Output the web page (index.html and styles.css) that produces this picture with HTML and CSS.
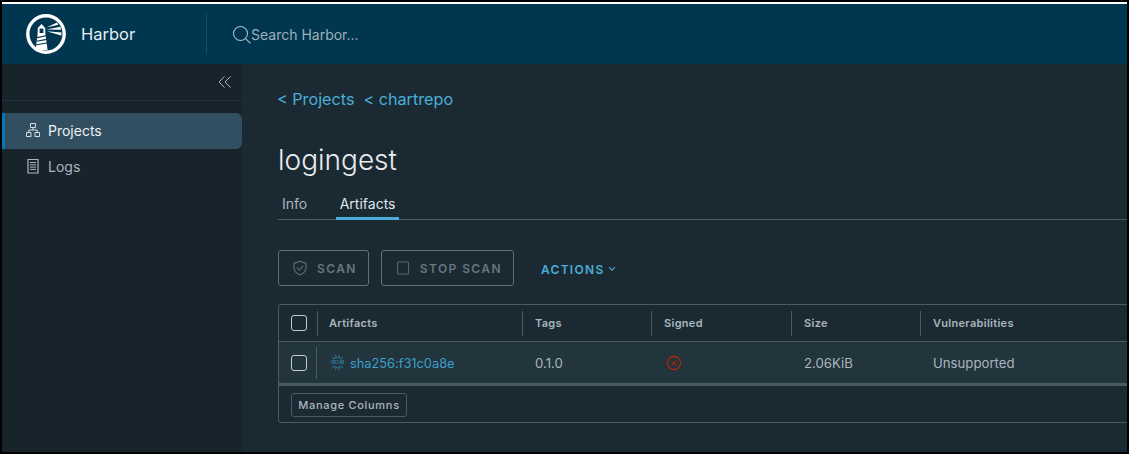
FILE: index.html
```html
<!DOCTYPE html>
<html lang="en">
<head>
<meta charset="utf-8">
<title>Harbor</title>
<link rel="stylesheet" href="styles.css">
</head>
<body>
<div class="frame">
  <header class="topbar">
    <div class="brand">
      <svg class="logo" width="40" height="40" viewBox="0 0 40 40" aria-hidden="true">
        <circle cx="20" cy="20" r="18.2" fill="none" stroke="#fff" stroke-width="3.4"/>
        <path d="M11.8 14 L15.5 10 L19.2 14 L19.4 20 L21.6 36 L9.6 36 L11.6 20 Z" fill="#fff"/>
        <path d="M13.6 14.6 H17.4 V19 H13.6 Z" fill="#00364f"/>
        <path d="M11 23.6 L20.2 21.8 M10.6 27.2 L20.7 25.4 M10.2 30.8 L21.2 29" stroke="#00364f" stroke-width="1.1"/>
        <path d="M20.6 13.6 L31 8.4 L32.4 10.8 Z M20.6 15.4 L34.4 12.8 L35 15.8 Z M20.6 17.2 L35.6 18.4 L35.2 21.4 Z" fill="#fff"/>
      </svg>
      <span class="brand-name">Harbor</span>
    </div>
    <div class="search">
      <svg width="20" height="20" viewBox="0 0 20 20" aria-hidden="true">
        <circle cx="8.5" cy="8.5" r="7" fill="none" stroke="#a9bac4" stroke-width="1.1"/>
        <path d="M13.6 13.6 L18.4 18.4" stroke="#a9bac4" stroke-width="1.3"/>
      </svg>
      <span>Search Harbor...</span>
    </div>
  </header>
  <div class="body">
    <aside class="sidebar">
      <div class="collapse">
        <svg width="14" height="14" viewBox="0 0 14 14" aria-hidden="true">
          <path d="M6.5 1.5 L1 7 L6.5 12.5 M12.5 1.5 L7 7 L12.5 12.5" fill="none" stroke="#a9b6be" stroke-width="1"/>
        </svg>
      </div>
      <nav class="nav">
        <a class="nav-item active">
          <svg width="16" height="16" viewBox="0 0 16 16" aria-hidden="true">
            <path d="M5.5 1.5 H10.5 V5.5 H5.5 Z M1.5 10.5 H6 V14.5 H1.5 Z M10 10.5 H14.5 V14.5 H10 Z M8 5.5 V8 M3.8 10.5 V8 H12.2 V10.5" fill="none" stroke="#d5dde2" stroke-width="1"/>
          </svg>
          <span>Projects</span>
        </a>
        <a class="nav-item">
          <svg width="16" height="16" viewBox="0 0 16 16" aria-hidden="true">
            <path d="M3 1.5 H13 V15 H3 Z" fill="none" stroke="#a9b6be" stroke-width="1.2"/>
            <path d="M5 4.5 H11 M5 6.8 H11 M5 9.1 H11 M5 11.4 H11" stroke="#a9b6be" stroke-width="1"/>
          </svg>
          <span>Logs</span>
        </a>
      </nav>
    </aside>
    <main class="content">
      <div class="crumbs"><a>&lt; Projects</a><a>&lt; chartrepo</a></div>
      <h1 class="title">logingest</h1>
      <div class="tabs">
        <a class="tab tab-info">Info</a>
        <a class="tab tab-active">Artifacts</a>
      </div>
      <div class="actions">
        <button class="btn">
          <svg width="16" height="16" viewBox="0 0 16 16" aria-hidden="true">
            <path d="M8 1.2 L14 3.4 V8 C14 11.5 11 13.8 8 15 C5 13.8 2 11.5 2 8 V3.4 Z M5 7.6 L7.4 10 L11.2 5.8" fill="none" stroke="#5f7078" stroke-width="1.1"/>
          </svg>
          <span>SCAN</span>
        </button>
        <button class="btn">
          <svg width="16" height="16" viewBox="0 0 16 16" aria-hidden="true">
            <rect x="2.5" y="2" width="11" height="12" rx="1" fill="none" stroke="#56666e" stroke-width="1.1"/>
          </svg>
          <span>STOP SCAN</span>
        </button>
        <a class="dropdown">ACTIONS
          <svg width="8" height="6" viewBox="0 0 8 6" aria-hidden="true"><path d="M1 1.2 L4 4.2 L7 1.2" fill="none" stroke="#4aaed9" stroke-width="1.1"/></svg>
        </a>
      </div>
      <section class="grid">
        <div class="grid-row grid-head">
          <div class="cell check"><span class="box"></span></div>
          <div class="cell head-first">Artifacts</div>
          <div class="cell">Tags</div>
          <div class="cell">Signed</div>
          <div class="cell">Size</div>
          <div class="cell">Vulnerabilities</div>
        </div>
        <div class="grid-row grid-data">
          <div class="cell check"><span class="box"></span></div>
          <div class="cell artifact">
            <svg width="17" height="17" viewBox="0 0 17 17" aria-hidden="true">
              <path d="M2.6 2.8 L4.4 4.6 M14.4 2.8 L12.6 4.6 M6.6 0.8 L7.2 3.2 M10.4 0.8 L9.8 3.2 M4 5.4 C6 3 11 3 13 5.4 M4 11.6 C6 14 11 14 13 11.6 M2.6 14.2 L4.4 12.4 M14.4 14.2 L12.6 12.4 M6.6 16.2 L7.2 13.8 M10.4 16.2 L9.8 13.8" fill="none" stroke="#2f7f9f" stroke-width="1"/>
              <text x="8.5" y="10.2" text-anchor="middle" class="helm">HELM</text>
            </svg>
            <a>sha256:f31c0a8e</a>
          </div>
          <div class="cell">0.1.0</div>
          <div class="cell signed">
            <svg width="16" height="16" viewBox="0 0 16 16" aria-hidden="true">
              <circle cx="8" cy="8" r="6.6" fill="none" stroke="#c92100" stroke-width="1.1"/>
              <path d="M5.4 5.4 L10.6 10.6 M10.6 5.4 L5.4 10.6" stroke="#c92100" stroke-width="1"/>
            </svg>
          </div>
          <div class="cell">2.06KiB</div>
          <div class="cell">Unsupported</div>
        </div>
        <div class="grid-foot"><button class="manage">Manage Columns</button></div>
      </section>
    </main>
  </div>
</div>
</body>
</html>
```
FILE: styles.css
```css
* { box-sizing: border-box; }
html, body { margin: 0; height: 100%; }
body { background: #000; font-family: "Inter", "Liberation Sans", sans-serif; overflow: hidden; }
.frame {
  height: 454px;
  border: 2px solid #000;
  display: flex;
  flex-direction: column;
  background: #1b2a32;
  overflow: hidden;
}
.topbar {
  height: 62px;
  flex: none;
  border-top: 2px solid #fff;
  background: #00364f;
  display: flex;
  align-items: center;
  color: #fff;
}
.brand {
  width: 205px;
  height: 40px;
  display: flex;
  align-items: center;
  padding-left: 24px;
  border-right: 1px solid #1d4b61;
}
.logo { flex: none; }
.brand-name { margin-left: 15px; font-size: 16.5px; color: #e6eef2; }
.search {
  display: flex;
  align-items: center;
  margin-left: 25px;
  margin-top: 1px;
  color: #9fb0ba;
  font-size: 14px;
}
.search span { margin-left: -1px; }
.body { flex: 1; display: flex; min-height: 0; }
.sidebar { width: 240px; flex: none; background: #17242b; }
.collapse {
  height: 37px;
  border-bottom: 1px solid #22323a;
  display: flex;
  align-items: center;
  justify-content: flex-end;
  padding-right: 10px;
}
.nav { margin-top: 12px; display: flex; flex-direction: column; }
.nav-item {
  height: 36px;
  display: flex;
  align-items: center;
  gap: 7px;
  padding-left: 23px;
  padding-bottom: 2px;
  font-size: 14px;
  color: #a9b6be;
}
.active {
  background: #324f61;
  border-left: 3px solid #0079b8;
  padding-left: 20px;
  border-radius: 0 6px 6px 0;
  color: #eaf0f3;
}
.content { flex: 1; min-width: 0; padding: 0 0 0 36px; overflow: hidden; }
.crumbs {
  margin-top: 25px;
  margin-left: -1px;
  height: 20px;
  display: flex;
  gap: 9px;
  font-size: 16.2px;
  line-height: 20px;
  color: #4aaed9;
}
.title {
  margin: 34px 0 0;
  font-size: 28px;
  line-height: 34px;
  font-weight: 300;
  color: #e9ecef;
}
.tabs {
  margin-top: 9px;
  height: 34px;
  display: flex;
  gap: 25px;
  border-bottom: 1px solid #4c5b63;
  font-size: 14px;
}
.tab { line-height: 36px; height: 34px; color: #a9b6be; }
.tab-info { padding: 0 4px; }
.tab-active { color: #dfe5e8; border-bottom: 3px solid #4aaed9; padding: 0 3.5px; }
.actions { margin-top: 30px; display: flex; align-items: center; gap: 12px; }
.btn {
  height: 36px;
  display: flex;
  align-items: center;
  gap: 9px;
  padding: 0 11px 0 13px;
  background: transparent;
  border: 1px solid #5f7078;
  border-radius: 3px;
  font: 600 12px "Inter", "Liberation Sans", sans-serif;
  letter-spacing: 1.4px;
  color: #66767e;
}
.dropdown {
  margin-left: 15px;
  padding-top: 2px;
  display: flex;
  align-items: center;
  gap: 3px;
  font-size: 12px;
  font-weight: 600;
  letter-spacing: 1.3px;
  color: #4aaed9;
}
.grid {
  margin-top: 18px;
  width: 900px;
  height: 119px;
  border: 1px solid #4c5b63;
  border-radius: 3px;
  font-size: 13.2px;
  color: #a9b6be;
}
.grid-row { display: grid; grid-template-columns: 38px 205px 129px 140px 129px 1fr; align-items: center; }
.grid-head {
  height: 37px;
  border-bottom: 1px solid #4c5b63;
  font-size: 11px;
  font-weight: 600;
  letter-spacing: 0.3px;
  color: #a9b6be;
}
.grid-head .cell { height: 25px; border-left: 1px solid #4c5b63; padding-left: 12px; }
.grid-head .cell.check { border-left: 0; }
.grid-head .cell.head-first { padding-left: 11px; }
.grid-data {
  height: 44px;
  background: #22343c;
  border-bottom: 3px solid #4c5b63;
}
.cell { display: flex; align-items: center; padding-left: 13px; }
.grid-row .check { padding-left: 12px; }
.grid-data .artifact { height: 32px; border-left: 1px solid #4c5b63; margin-left: -1px; padding-left: 12px; gap: 4px; }
.signed { padding-left: 15px; }
.box { width: 16px; height: 16px; border: 1px solid #c2ccd2; border-radius: 3px; }
.artifact a { color: #3f9fcc; font-size: 12.8px; margin-top: 1px; }
.helm { font: 700 4.6px "Inter", sans-serif; fill: #2f7f9f; }
.grid-foot { padding: 7px 12px; }
.manage {
  height: 24px;
  width: 116px;
  padding: 0;
  background: transparent;
  border: 1px solid #4c5b63;
  border-radius: 3px;
  font: 500 11px "Inter", "Liberation Sans", sans-serif;
  letter-spacing: 0.7px;
  color: #a9b6be;
}
```
